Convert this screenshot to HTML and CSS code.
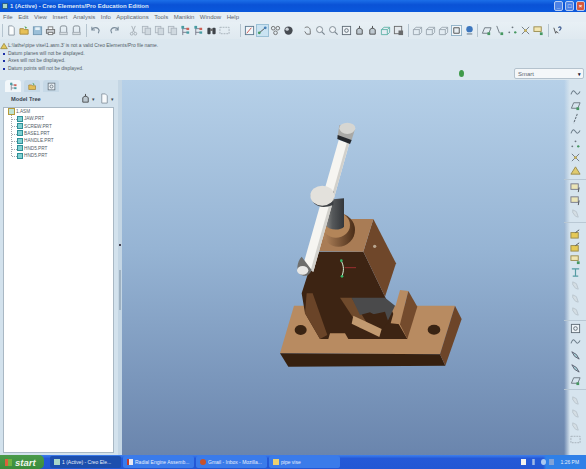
FILE: index.html
```html
<!DOCTYPE html>
<html lang="en">
<head>
  <meta charset="UTF-8">
  <title>1 (Active) - Creo Elements/Pro Education Edition</title>
  <link rel="stylesheet" href="styles.css">
</head>
<body>
  <svg class="defs" width="0" height="0">
    <symbol id="i-new" viewBox="0 0 12 12"><path d="M3 1h4l2 2v8H3z" fill="#fff" stroke="#7d8a96"/></symbol>
    <symbol id="i-open" viewBox="0 0 12 12"><path d="M1 4h4l1 1h4v5H1z" fill="#e8b93c" stroke="#a07a20"/><path d="M6 1l3 2-2 1z" fill="#3f9a3f"/></symbol>
    <symbol id="i-save" viewBox="0 0 12 12"><rect x="1.500" y="2" width="9" height="8.500" fill="#8fb8d4" stroke="#5f8aa8"/><rect x="3.500" y="2.500" width="5" height="3" fill="#e8f2f8"/></symbol>
    <symbol id="i-print" viewBox="0 0 12 12"><rect x="1.500" y="5" width="9" height="4" fill="#c9cdd2" stroke="#555"/><rect x="3.500" y="2" width="5" height="3" fill="#fff" stroke="#666"/><rect x="3.500" y="8" width="5" height="2.500" fill="#fff" stroke="#666"/></symbol>
    <symbol id="i-doc" viewBox="0 0 12 12"><path d="M2.500 9V3a2 2 0 012-2h3a2 2 0 012 2v6" fill="none" stroke="#6d7780"/><rect x="2" y="8" width="8" height="2.500" fill="#d8dde2" stroke="#9aa3ab"/></symbol>
    <symbol id="i-undo" viewBox="0 0 12 12"><path d="M2 5c2-3 7-3 8 1l-1 3M2 2v3.500h3.500" fill="none" stroke="#6d7f8f" stroke-width="1.200"/></symbol>
    <symbol id="i-redo" viewBox="0 0 12 12"><path d="M10 5C8 2 3 2 2 6l1 3M10 2v3.500H6.500" fill="none" stroke="#6d7f8f" stroke-width="1.200"/></symbol>
    <symbol id="i-cut" viewBox="0 0 12 12"><path d="M4 1l3 7M8 1L5 8" stroke="#9aa3ab" fill="none"/><circle cx="4" cy="9.500" r="1.500" fill="none" stroke="#9aa3ab"/><circle cx="8" cy="9.500" r="1.500" fill="none" stroke="#9aa3ab"/></symbol>
    <symbol id="i-copy" viewBox="0 0 12 12"><rect x="1.500" y="1.500" width="6" height="7" fill="#dfe5ea" stroke="#a3adb6"/><rect x="4.500" y="3.500" width="6" height="7" fill="#cdd6dd" stroke="#a3adb6"/></symbol>
    <symbol id="i-tree" viewBox="0 0 12 12"><path d="M3 1v10M3 4h5M3 8h5" stroke="#667" fill="none"/><rect x="1.500" y="1" width="3" height="3" fill="#2d8f95"/><rect x="7" y="3" width="3" height="2.500" fill="#c94a3c"/><rect x="7" y="7" width="3" height="2.500" fill="#2d8f95"/></symbol>
    <symbol id="i-find" viewBox="0 0 12 12"><rect x="1.500" y="3" width="3.500" height="7" rx="1" fill="#22262c"/><rect x="7" y="3" width="3.500" height="7" rx="1" fill="#22262c"/><rect x="4.500" y="4" width="3" height="2.500" fill="#555"/></symbol>
    <symbol id="i-frame" viewBox="0 0 12 12"><rect x="1" y="2.500" width="10" height="7" fill="none" stroke="#9aa5ae" stroke-dasharray="2 1"/></symbol>
    <symbol id="i-chart" viewBox="0 0 12 12"><rect x="1.500" y="1.500" width="9" height="9" fill="#f4f8fb" stroke="#46667f"/><path d="M3 9l5-6" stroke="#c93a2f"/></symbol>
    <symbol id="i-net" viewBox="0 0 12 12"><path d="M2 9l7-6" stroke="#333"/><circle cx="2.500" cy="8.500" r="1.500" fill="#2b8f4a"/><circle cx="9" cy="3" r="1.500" fill="#2b6fb0"/></symbol>
    <symbol id="i-dots" viewBox="0 0 12 12"><circle cx="3.500" cy="3.500" r="2" fill="none" stroke="#555"/><circle cx="8.500" cy="3.500" r="2" fill="none" stroke="#555"/><circle cx="6" cy="8.500" r="2" fill="none" stroke="#555"/></symbol>
    <symbol id="i-sphere" viewBox="0 0 12 12"><circle cx="6" cy="6" r="4.500" fill="#2b2f36"/><circle cx="4.500" cy="4.500" r="1.800" fill="#c9ced4"/></symbol>
    <symbol id="i-hand" viewBox="0 0 12 12"><path d="M3 3c3-2 6 0 6 3v4H5L3 7" fill="none" stroke="#555"/></symbol>
    <symbol id="i-zoom" viewBox="0 0 12 12"><circle cx="5" cy="5" r="3.300" fill="#f0f5f8" stroke="#68747e"/><path d="M7.500 7.500l3 3" stroke="#68747e" stroke-width="1.300"/></symbol>
    <symbol id="i-fit" viewBox="0 0 12 12"><rect x="1.500" y="1.500" width="9" height="9" fill="#f0f5f8" stroke="#4a5660"/><circle cx="6" cy="6" r="2" fill="none" stroke="#4a5660"/></symbol>
    <symbol id="i-spin" viewBox="0 0 12 12"><path d="M3 10V5l3-2 3 2v5z" fill="#b9c4cc" stroke="#333"/><path d="M6 1v3" stroke="#333"/></symbol>
    <symbol id="i-cube" viewBox="0 0 12 12"><path d="M1.500 5l3-2.500h6V8L8 10.500H1.500zM1.500 5H8v5.500M8 5l2.500-2.500" fill="none" stroke="#8e9aa4"/></symbol>
    <symbol id="i-cubeg" viewBox="0 0 12 12"><path d="M1.500 5l3-2.500h6V8L8 10.500H1.500zM1.500 5H8v5.500M8 5l2.500-2.500" fill="none" stroke="#49a89a"/></symbol>
    <symbol id="i-saved" viewBox="0 0 12 12"><rect x="1.500" y="1.500" width="8" height="8" fill="#e4e9ed" stroke="#555"/><rect x="6" y="6" width="5" height="5" fill="#555"/></symbol>
    <symbol id="i-shade" viewBox="0 0 12 12"><rect x="0.500" y="0.500" width="11" height="11" fill="#f4f8fb" stroke="#7fa6bf"/><path d="M3 3h6v6H3z" fill="#e6edf2" stroke="#333"/></symbol>
    <symbol id="i-ball" viewBox="0 0 12 12"><circle cx="6" cy="4.500" r="3.500" fill="#1f62b5"/><rect x="3" y="9" width="6" height="1.500" fill="#7a8a96"/></symbol>
    <symbol id="i-plane" viewBox="0 0 12 12"><path d="M1.500 9L4 3h7L8.500 9z" fill="none" stroke="#59636c"/><rect x="7" y="8" width="3" height="3" fill="#2c8a48"/></symbol>
    <symbol id="i-axis" viewBox="0 0 12 12"><path d="M3 1l3 8" stroke="#59636c"/><rect x="7" y="8" width="3" height="3" fill="#2c8a48"/></symbol>
    <symbol id="i-points" viewBox="0 0 12 12"><circle cx="6" cy="2.500" r="1" fill="#59636c"/><circle cx="2.500" cy="8" r="1" fill="#59636c"/><circle cx="9" cy="8" r="1.300" fill="#2c8a48"/></symbol>
    <symbol id="i-csys" viewBox="0 0 12 12"><path d="M2 2l8 8M10 2l-8 8" stroke="#59636c"/><circle cx="6" cy="6" r="1.500" fill="#c2a43a"/></symbol>
    <symbol id="i-note" viewBox="0 0 12 12"><rect x="1" y="2" width="8" height="5" fill="#f5e6a8" stroke="#8d7a30"/><rect x="7.500" y="8" width="3" height="3" fill="#2c8a48"/></symbol>
    <symbol id="i-help" viewBox="0 0 12 12"><path d="M2 3l2 6 1-2 2 2" fill="none" stroke="#333"/><path d="M7 3c2-2 4 0 2 2l-1 1" fill="none" stroke="#22427f" stroke-width="1.300"/></symbol>
    <symbol id="i-curve" viewBox="0 0 12 12"><path d="M1 8c2-5 3-5 5-2s3 2 5-1" fill="none" stroke="#5a6b78" stroke-width="1.100"/></symbol>
    <symbol id="i-line" viewBox="0 0 12 12"><path d="M8 1L4 11" stroke="#4f5a63" stroke-dasharray="2.500 1" stroke-width="1.100"/></symbol>
    <symbol id="i-warn" viewBox="0 0 12 12"><path d="M6 2l5 8H1z" fill="#e2c75a" stroke="#8d7a30"/></symbol>
    <symbol id="i-box" viewBox="0 0 12 12"><rect x="1" y="2" width="8" height="6" fill="#efe6ae" stroke="#667"/><path d="M10 6l-1 5" stroke="#333"/></symbol>
    <symbol id="i-folder" viewBox="0 0 12 12"><rect x="1" y="5" width="8" height="6" fill="#e8c53c" stroke="#8d7a30"/><path d="M6 5l4-3" stroke="#333"/></symbol>
    <symbol id="i-arrow" viewBox="0 0 12 12"><path d="M2 3l5 3 3 5-5-3z" fill="#9fd2d8" stroke="#445"/></symbol>
    <symbol id="i-fade" viewBox="0 0 12 12"><path d="M3 2l4 2 2 6-3-1-3-4z" fill="#d4dde3" stroke="#b3bec6"/></symbol>
    <symbol id="i-t" viewBox="0 0 12 12"><path d="M2 2h8M6 2v8M3 10h6" stroke="#3f8f97" stroke-width="1.300" fill="none"/></symbol>
  </svg>

  <header class="titlebar">
    <span class="title-icon"></span>
    <span class="title-text">1 (Active) - Creo Elements/Pro Education Edition</span>
    <span class="win-btns">
      <span class="win-btn">_</span>
      <span class="win-btn">&#9633;</span>
      <span class="win-btn close">&#215;</span>
    </span>
  </header>

  <nav class="menubar">
    <span>File</span><span>Edit</span><span>View</span><span>Insert</span><span>Analysis</span><span>Info</span><span>Applications</span><span>Tools</span><span>Manikin</span><span>Window</span><span>Help</span>
  </nav>

  <div class="toolbar">
    <i class="sep"></i>
    <svg class="ic"><use href="#i-new"/></svg>
    <svg class="ic"><use href="#i-open"/></svg>
    <svg class="ic"><use href="#i-save"/></svg>
    <svg class="ic"><use href="#i-print"/></svg>
    <svg class="ic"><use href="#i-doc"/></svg>
    <svg class="ic"><use href="#i-doc"/></svg>
    <i class="sep"></i>
    <svg class="ic after-6"><use href="#i-undo"/></svg>
    <svg class="ic after-6"><use href="#i-redo"/></svg>
    <svg class="ic"><use href="#i-cut"/></svg>
    <svg class="ic"><use href="#i-copy"/></svg>
    <svg class="ic"><use href="#i-copy"/></svg>
    <svg class="ic"><use href="#i-copy"/></svg>
    <svg class="ic"><use href="#i-tree"/></svg>
    <svg class="ic"><use href="#i-tree"/></svg>
    <svg class="ic"><use href="#i-find"/></svg>
    <svg class="ic after-6"><use href="#i-frame"/></svg>
    <i class="sep"></i>
    <svg class="ic"><use href="#i-chart"/></svg>
    <svg class="ic on"><use href="#i-net"/></svg>
    <svg class="ic"><use href="#i-dots"/></svg>
    <svg class="ic after-6"><use href="#i-sphere"/></svg>
    <svg class="ic"><use href="#i-hand"/></svg>
    <svg class="ic"><use href="#i-zoom"/></svg>
    <svg class="ic"><use href="#i-zoom"/></svg>
    <svg class="ic"><use href="#i-fit"/></svg>
    <svg class="ic"><use href="#i-spin"/></svg>
    <svg class="ic"><use href="#i-spin"/></svg>
    <svg class="ic"><use href="#i-cubeg"/></svg>
    <svg class="ic"><use href="#i-saved"/></svg>
    <i class="sep"></i>
    <svg class="ic"><use href="#i-cube"/></svg>
    <svg class="ic"><use href="#i-cube"/></svg>
    <svg class="ic"><use href="#i-cube"/></svg>
    <svg class="ic"><use href="#i-shade"/></svg>
    <svg class="ic tight"><use href="#i-ball"/></svg>
    <i class="sep"></i>
    <svg class="ic"><use href="#i-plane"/></svg>
    <svg class="ic"><use href="#i-axis"/></svg>
    <svg class="ic"><use href="#i-points"/></svg>
    <svg class="ic"><use href="#i-csys"/></svg>
    <svg class="ic"><use href="#i-note"/></svg>
    <i class="sep"></i>
    <svg class="ic"><use href="#i-help"/></svg>
  </div>

  <section class="messages">
    <ul class="msg-list">
      <li class="warn"><svg class="warn-ic"><use href="#i-warn"/></svg>L:\lathe\pipe vise\1.asm.3' is not a valid Creo Elements/Pro file name.</li>
      <li>Datum planes will not be displayed.</li>
      <li>Axes will not be displayed.</li>
      <li>Datum points will not be displayed.</li>
    </ul>
    <div class="status-right">
      <span class="status-light"></span>
      <span class="filter">Smart<b>&#9662;</b></span>
    </div>
  </section>

  <main class="workspace">
    <aside class="navigator">
      <div class="nav-tabs">
        <span class="tab active"><svg class="ic"><use href="#i-tree"/></svg></span>
        <span class="tab"><svg class="ic"><use href="#i-open"/></svg></span>
        <span class="tab"><svg class="ic"><use href="#i-fit"/></svg></span>
      </div>
      <div class="tree-head">
        <strong>Model Tree</strong>
        <span class="tree-tools">
          <svg class="ic"><use href="#i-spin"/></svg><small>&#9662;</small>
          <svg class="ic"><use href="#i-new"/></svg><small>&#9662;</small>
        </span>
      </div>
      <div class="tree">
        <div class="tree-root"><span class="asm"></span>1.ASM</div>
        <ul class="tree-list">
          <li><span class="prt"></span>JAW.PRT</li>
          <li><span class="prt"></span>SCREW.PRT</li>
          <li><span class="prt"></span>BASE1.PRT</li>
          <li><span class="prt"></span>HANDLE.PRT</li>
          <li><span class="prt"></span>HND5.PRT</li>
          <li><span class="prt"></span>HND5.PRT</li>
        </ul>
      </div>
    </aside>
    <div class="sash"><i></i><i class="notch"></i></div>

    <div class="viewport">
      <svg class="model" width="200" height="260" viewBox="0 0 600 780">
        <defs>
          <linearGradient id="steel" x1="0" y1="0" x2="1" y2="0"><stop offset="0" stop-color="#8b8b89"/><stop offset="0.4" stop-color="#55585a"/><stop offset="1" stop-color="#33363a"/></linearGradient>
          <linearGradient id="collar" x1="0" y1="0" x2="1" y2="0"><stop offset="0" stop-color="#b98a60"/><stop offset="1" stop-color="#4a2d18"/></linearGradient>
        </defs>
        <!-- base plate -->
        <path d="M30 715L72 572 555 572 510 718z" fill="#b88b61"/>
        <path d="M30 715L510 718 526 752 55 755z" fill="#36200f"/>
        <path d="M555 572L575 612 526 752 510 718z" fill="#6d4529"/>
        <ellipse cx="92" cy="645" rx="18" ry="15" fill="#3a2413"/>
        <ellipse cx="492" cy="644" rx="19" ry="15" fill="#3a2413"/>
        <!-- body -->
        <path d="M135 410L95 535 105 595 150 672 175 672 180 655 225 655 235 672 412 672 382 620 345 545 280 410z" fill="#3d2413"/>
        <path d="M110 535L128 535 172 660 150 672 105 595z" fill="#6a4428"/>
        <path d="M210 548L245 548 300 640 270 640z" fill="#6f4a2c"/>
        <path d="M245 548L345 548 375 572 352 620 300 592 270 600z" fill="#4a4a4b"/>
        <path d="M300 600L345 590 355 620 340 640z" fill="#3d2413"/>
        <path d="M250 602L335 642 328 666 245 626z" fill="#c29a70"/>
        <path d="M390 525L362 625 390 628 415 528z" fill="#b88b61"/>
        <path d="M415 528L442 575 412 672 390 628z" fill="#744b2d"/>
        <path d="M345 545L378 445 310 312 280 410z" fill="#6f472a"/>
        <!-- top block -->
        <path d="M245 312L310 312 280 410 135 408 158 350z" fill="#a97c55"/>
        <circle cx="314" cy="394" r="5" fill="#b9a791"/>
        <ellipse cx="205" cy="345" rx="50" ry="50" fill="url(#collar)"/>
        <ellipse cx="198" cy="330" rx="42" ry="38" fill="#b38559"/>
        <path d="M165 255L222 250 222 335C215 345 180 350 165 330z" fill="url(#steel)"/>
        <!-- handle -->
        <path d="M206 75L238 85 130 470 98 455z" fill="#f6f5f1"/>
        <path d="M238 85L130 470 122 466 231 82z" fill="#d2d1cc"/>
        <path d="M208 30L255 42 245 75 203 62z" fill="#a9a9a6"/>
        <ellipse cx="232" cy="40" rx="24" ry="17" fill="#d6d6d2"/>
        <path d="M203 60L245 75 240 87 202 72z" fill="#25282c"/>
        <path d="M95 425C80 440 78 470 90 478 105 488 120 480 125 465z" fill="#6e6e6c"/>
        <ellipse cx="98" cy="466" rx="17" ry="13" fill="#e8e8e6"/>
        <path d="M122 240C125 270 150 285 190 270L192 230 140 225z" fill="#3d4044"/>
        <ellipse cx="157" cy="242" rx="36" ry="30" fill="#e3e1dc"/>
        <!-- csys -->
        <path d="M214 438C222 455 222 465 216 484" fill="none" stroke="#d9f0d8" stroke-width="3"/>
        <circle cx="214" cy="437" r="4" fill="#38b86a"/>
        <circle cx="216" cy="484" r="4" fill="#38b86a"/>
        <path d="M224 458H258" stroke="#9a3030" stroke-width="3"/>
      </svg>
    </div>

    <aside class="sidebar">
      <div class="side-group">
        <svg class="ic"><use href="#i-curve"/></svg>
        <svg class="ic"><use href="#i-plane"/></svg>
        <svg class="ic"><use href="#i-line"/></svg>
        <svg class="ic"><use href="#i-curve"/></svg>
        <svg class="ic"><use href="#i-points"/></svg>
        <svg class="ic"><use href="#i-csys"/></svg>
        <svg class="ic"><use href="#i-warn"/></svg>
      </div>
      <div class="side-group">
        <svg class="ic"><use href="#i-box"/></svg>
        <svg class="ic"><use href="#i-box"/></svg>
        <svg class="ic"><use href="#i-fade"/></svg>
      </div>
      <div class="side-group loose">
        <svg class="ic"><use href="#i-folder"/></svg>
        <svg class="ic"><use href="#i-folder"/></svg>
        <svg class="ic"><use href="#i-note"/></svg>
        <svg class="ic"><use href="#i-t"/></svg>
        <svg class="ic"><use href="#i-fade"/></svg>
        <svg class="ic"><use href="#i-fade"/></svg>
        <svg class="ic"><use href="#i-fade"/></svg>
      </div>
      <div class="side-group">
        <svg class="ic"><use href="#i-fit"/></svg>
        <svg class="ic"><use href="#i-curve"/></svg>
        <svg class="ic"><use href="#i-arrow"/></svg>
        <svg class="ic"><use href="#i-arrow"/></svg>
        <svg class="ic"><use href="#i-plane"/></svg>
      </div>
      <div class="side-group loose">
        <svg class="ic"><use href="#i-fade"/></svg>
        <svg class="ic"><use href="#i-fade"/></svg>
        <svg class="ic"><use href="#i-fade"/></svg>
        <svg class="ic"><use href="#i-frame"/></svg>
      </div>
    </aside>
  </main>

  <footer class="taskbar">
    <span class="start"><span class="flag"></span>start</span>
    <span class="task active"><span class="task-ic"></span>1 (Active) - Creo Ele...</span>
    <span class="task"><span class="task-ic red"></span>Radial Engine Assemb...</span>
    <span class="task"><span class="task-ic fox"></span>Gmail - Inbox - Mozilla...</span>
    <span class="task"><span class="task-ic folder"></span>pipe vise</span>
    <span class="tray">
      <i class="tray-a"></i><i class="tray-b"></i><i class="tray-c"></i><i class="tray-d"></i>
      <span class="clock">1:26 PM</span>
    </span>
  </footer>
</body>
</html>
```

FILE: styles.css
```css
* {
  box-sizing: border-box;
}
html, body {
  margin: 0;
  height: 100%;
  overflow: hidden;
}
body {
  width: 586px;
  height: 469px;
  display: flex;
  flex-direction: column;
  font-family: "Liberation Sans", Arial, sans-serif;
  font-size: 6px;
  color: #3a4450;
  background: #dce8f0;
}
ul {
  list-style: none;
  margin: 0;
  padding: 0;
}
.defs {
  position: absolute;
}
.ic {
  width: 11px;
  height: 11px;
  flex: none;
  opacity: .85;
  filter: blur(.3px);
}

/* title bar */
.titlebar {
  height: 12px;
  flex: none;
  display: flex;
  align-items: center;
  padding-left: 2px;
  background: linear-gradient(#1c6fe8, #0a52d6 40%, #0a58dc);
  color: #dfe9f8;
  font-size: 6px;
  font-weight: bold;
}
.title-icon {
  width: 6px;
  height: 6px;
  margin-right: 2px;
  background: #a9d6c8;
  border: 1px solid #2a5f8a;
}
.win-btns {
  margin-left: auto;
  display: flex;
  gap: 2px;
  padding-right: 1px;
}
.win-btn {
  width: 9px;
  height: 10px;
  border-radius: 2px;
  background: #4d82e6;
  border: 1px solid #b8cdf2;
  color: #fff;
  font-size: 6px;
  line-height: 8px;
  text-align: center;
}
.win-btn.close {
  background: #d8593c;
}

/* menu */
.menubar {
  height: 10px;
  flex: none;
  display: flex;
  align-items: center;
  padding-left: 3px;
  gap: 5.500px;
  background: #e6eef4;
  font-size: 6px;
  color: #5a646e;
}

/* top toolbar */
.toolbar {
  height: 17px;
  flex: none;
  display: flex;
  align-items: center;
  gap: 2px;
  background: linear-gradient(#e8f0f5, #dfe9f0);
}
.toolbar .after-6 {
  margin-right: 6px;
}
.toolbar .tight {
  margin-right: -2px;
}
.toolbar .on {
  background: #c6e2f2;
  outline: 1px solid #8fb9d2;
}
.sep {
  width: 1px;
  height: 13px;
  margin: 0 1.500px;
  background: #b5c4cf;
  flex: none;
}

/* message area */
.messages {
  height: 41px;
  flex: none;
  display: flex;
  justify-content: space-between;
  background: #dbe7ef;
}
.msg-list {
  padding: 3px 0 0 8px;
  font-size: 4.900px;
  line-height: 7.500px;
  color: #515c66;
}
.msg-list li {
  position: relative;
}
.msg-list li::before {
  content: "";
  position: absolute;
  left: -5px;
  top: 3px;
  width: 2px;
  height: 2px;
  background: #1c2fa8;
}
.msg-list .warn::before {
  display: none;
}
.warn-ic {
  position: absolute;
  left: -8px;
  top: 0;
  width: 8px;
  height: 8px;
}
.status-right {
  display: flex;
  align-items: flex-end;
  padding: 0 2px 1px 0;
  gap: 50px;
}
.status-light {
  width: 5px;
  height: 7px;
  margin-bottom: 2px;
  border-radius: 50%;
  background: #3f9a4a;
}
.filter {
  width: 70px;
  height: 11px;
  display: flex;
  justify-content: space-between;
  align-items: center;
  padding: 0 2px 0 3px;
  background: #f4f7f9;
  border: 1px solid #b4c2cd;
  border-radius: 2px;
  font-size: 6px;
  color: #5d6770;
}
.filter b {
  font-size: 5px;
  color: #223;
}

/* main area */
.workspace {
  flex: 1;
  min-height: 0;
  display: flex;
}
.navigator {
  width: 118px;
  flex: none;
  display: flex;
  flex-direction: column;
  padding: 0 0 2px 3px;
  background: #d3e2ed;
}
.nav-tabs {
  height: 12px;
  flex: none;
  display: flex;
  gap: 3px;
  padding-left: 2px;
}
.tab {
  width: 16px;
  height: 12px;
  display: flex;
  justify-content: center;
  align-items: center;
  background: #c6d9e7;
  border-radius: 3px 3px 0 0;
}
.tab.active {
  background: #f2f7fa;
}
.tab .ic {
  width: 9px;
  height: 9px;
}
.tree-head {
  height: 15px;
  flex: none;
  display: flex;
  align-items: center;
  justify-content: space-between;
  padding: 0 1px 2px 8px;
  font-size: 5.700px;
}
.tree-head strong {
  color: #39444f;
}
.tree-tools {
  display: flex;
  align-items: center;
  gap: 1px;
}
.tree-tools small {
  font-size: 5px;
  margin-right: 3px;
}
.tree {
  flex: 1;
  width: 111px;
  padding: 0 0 0 4px;
  background: #fff;
  border: 1px solid #a9b8c4;
  font-size: 4.700px;
  color: #525c66;
}
.tree-root {
  height: 7px;
  display: flex;
  align-items: center;
  gap: 1px;
}
.asm {
  width: 7px;
  height: 7px;
  background: #bfe3d2;
  border: 1px solid #b59a3a;
}
.tree-list {
  margin-left: 3px;
  border-left: 1px dotted #a0a8ae;
  height: 41px;
}
.tree-list li {
  height: 7.400px;
  display: flex;
  align-items: center;
  gap: 1px;
  padding-left: 5px;
  position: relative;
}
.tree-list li::before {
  content: "";
  position: absolute;
  left: 0;
  top: 4px;
  width: 5px;
  border-top: 1px dotted #a0a8ae;
}
.prt {
  width: 6px;
  height: 6px;
  background: #7fd0d2;
  border: 1px solid #2f8f97;
}
.sash {
  width: 4px;
  flex: none;
  position: relative;
  background: #c4d6e4;
}
.sash i {
  position: absolute;
  left: 1px;
  top: 164px;
  width: 2px;
  height: 2px;
  background: #445;
}
.sash .notch {
  top: 190px;
  height: 40px;
  background: #9fb2c2;
}
.viewport {
  flex: 1;
  position: relative;
  overflow: hidden;
  background: linear-gradient(#b6d0e8, #96b4d4 45%, #6a85ad);
}
.model {
  position: absolute;
  left: 148px;
  top: 35px;
  filter: blur(.4px);
}
.sidebar {
  width: 22px;
  flex: none;
  display: flex;
  flex-direction: column;
  background: linear-gradient(90deg, rgba(214, 228, 238, 0), #d6e4ee 6px), linear-gradient(#b6d0e8, #6a85ad);
  padding-top: 4.500px;
}
.side-group {
  display: flex;
  flex-direction: column;
  align-items: center;
  gap: 2px;
  padding: 2px 0 3px 1px;
  border-bottom: 1px solid #b9c8d4;
}
.side-group.loose {
  margin-top: 3px;
}
.side-group:last-child {
  border-bottom: none;
}

/* windows taskbar */
.taskbar {
  height: 14px;
  flex: none;
  display: flex;
  align-items: center;
  background: linear-gradient(#3f80ec, #2459d8 25%, #2257d4);
  color: #e6eefa;
  font-size: 5px;
}
.start {
  width: 44px;
  height: 14px;
  display: flex;
  align-items: center;
  gap: 3px;
  padding-left: 5px;
  margin-right: 6px;
  background: linear-gradient(#4a9a4a, #3a8c3c);
  border-radius: 0 5px 5px 0;
  font-size: 9.500px;
  font-style: italic;
  font-weight: bold;
  color: #f0f6ee;
}
.flag {
  width: 7px;
  height: 7px;
  background: linear-gradient(90deg, #d9613c 50%, #6fb23f 50%);
}
.task {
  width: 71px;
  height: 12px;
  display: flex;
  align-items: center;
  gap: 2px;
  padding-left: 4px;
  margin-right: 2px;
  background: #3a7bea;
  border-radius: 2px;
  white-space: nowrap;
  overflow: hidden;
}
.task.active {
  background: #1c4fae;
  padding-left: 4px;
}
.task-ic {
  width: 6px;
  height: 6px;
  flex: none;
  background: #a9d6c8;
}
.task-ic.red {
  background: #e9e9f2;
  border-left: 2px solid #c83a2a;
}
.task-ic.fox {
  border-radius: 50%;
  background: #c8522a;
}
.task-ic.folder {
  background: #ecd070;
}
.tray {
  margin-left: auto;
  width: 66px;
  height: 14px;
  display: flex;
  align-items: center;
  gap: 5px;
  padding-left: .5px;
  background: linear-gradient(90deg, rgba(47, 127, 232, 0) 23px, #2f80e8 26px);
}
.tray i {
  width: 5px;
  height: 6px;
  flex: none;
}
.tray-a {
  background: #f2f2ee;
}
.tray-b {
  background: #9db8e6;
  transform: scaleX(.5);
}
.tray-c {
  background: #a9c8f0;
  border-radius: 50%;
  margin-right: -2px;
}
.tray-d {
  background: #7fa2d8;
  margin-right: 2px;
}
.clock {
  white-space: nowrap;
  font-size: 5px;
}
```
